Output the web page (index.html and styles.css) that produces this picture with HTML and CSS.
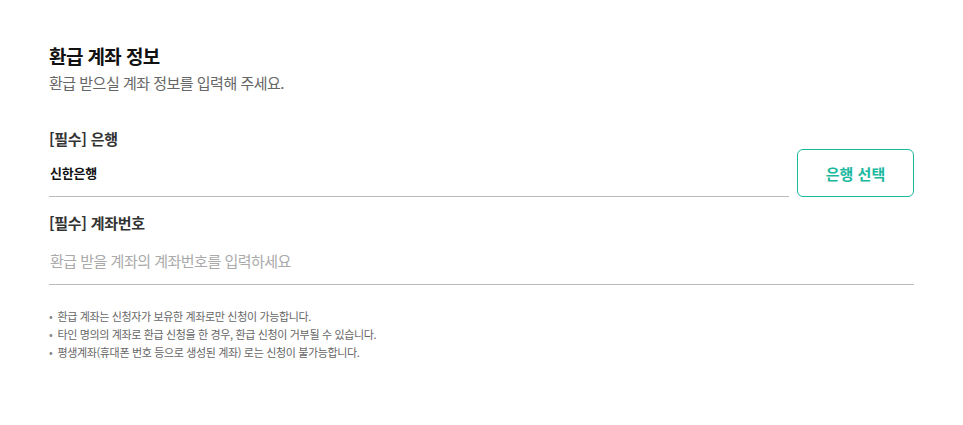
FILE: index.html
```html
<!DOCTYPE html>
<html lang="ko">
<head>
  <meta charset="utf-8">
  <title>환급 계좌 정보</title>
  <link rel="stylesheet" href="styles.css">
</head>
<body>
  <div id="content">
    <div class="section-head">
      <h2 class="section-title">환급 계좌 정보</h2>
      <p class="section-desc">환급 받으실 계좌 정보를 입력해 주세요.</p>
    </div>

    <div class="field field-bank">
      <label class="field-label">[필수] 은행</label>
      <div class="field-row">
        <div class="field-input bank-value">신한은행</div>
        <button class="select-button">은행 선택</button>
      </div>
    </div>

    <div class="field">
      <label class="field-label" for="accountNo">[필수] 계좌번호</label>
      <input type="text" id="accountNo" class="field-input" placeholder="환급 받을 계좌의 계좌번호를 입력하세요">
    </div>

    <ul class="notice">
      <li>환급 계좌는 신청자가 보유한 계좌로만 신청이 가능합니다.</li>
      <li>타인 명의의 계좌로 환급 신청을 한 경우, 환급 신청이 거부될 수 있습니다.</li>
      <li>평생계좌(휴대폰 번호 등으로 생성된 계좌) 로는 신청이 불가능합니다.</li>
    </ul>
  </div>
</body>
</html>
```

FILE: styles.css
```css
body {
  font-family: "Noto Sans CJK KR", "Noto Sans", sans-serif;
  margin: 0;
  color: #222;
}

#content {
  padding: 42px 49px;
}

.section-title {
  margin: 0;
  font-size: 19px;
  font-weight: bold;
  line-height: 28px;
  letter-spacing: -0.6px;
  color: #111;
}

.section-desc {
  margin: 0;
  font-size: 15px;
  line-height: 26px;
  letter-spacing: -0.5px;
  color: #666;
}

.field {
  margin-top: 12px;
}

.field-bank {
  margin-top: 29px;
}

.field-label {
  display: block;
  font-size: 15px;
  font-weight: bold;
  line-height: 28px;
  letter-spacing: -0.3px;
  color: #333;
}

.field-bank .field-label {
  margin-bottom: -4px;
}

.field-row {
  display: flex;
  align-items: flex-start;
  gap: 8px;
}

.field-input {
  display: block;
  box-sizing: border-box;
  width: 100%;
  height: 48px;
  padding: 0 1px;
  border: none;
  border-bottom: 1px solid #bbb;
  font-family: inherit;
  font-size: 15px;
  letter-spacing: -0.5px;
  color: #222;
  outline: none;
  background: none;
}

.field-input::placeholder {
  color: #aaa;
}

.bank-value {
  flex: 1;
  line-height: 47px;
  font-size: 13px;
  font-weight: bold;
  letter-spacing: -0.2px;
  color: #111;
}

.select-button {
  flex: none;
  width: 117px;
  height: 48px;
  border: 1px solid #1bb8a0;
  border-radius: 6px;
  background: #fff;
  color: #1bb8a0;
  font-family: inherit;
  font-size: 15px;
  font-weight: bold;
  cursor: pointer;
}

.notice {
  list-style: none;
  margin: 22px 0 0;
  padding: 0;
  font-size: 11px;
  line-height: 18px;
  letter-spacing: -0.35px;
  color: #666;
}

.notice li::before {
  content: "•";
  margin-right: 5px;
  color: #888;
}
```
